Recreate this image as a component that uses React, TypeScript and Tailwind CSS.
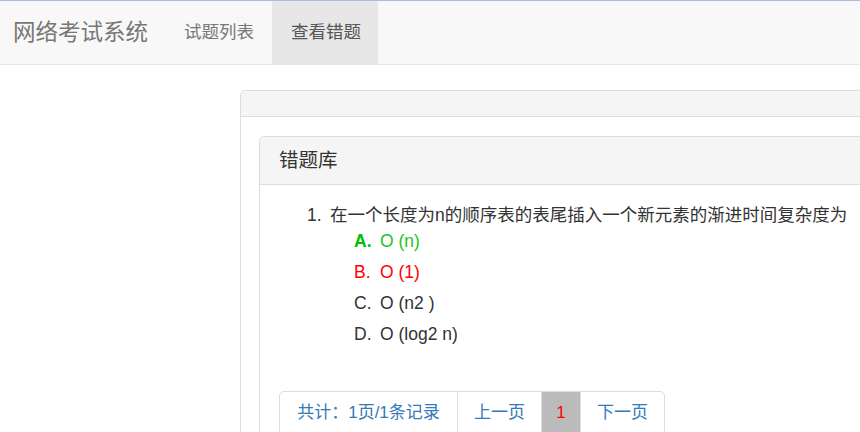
export default function App() {
  const options = [
    { key: "A.", text: "O (n)", cls: "text-[#22c322]", keyCls: "font-bold text-[#00c000]" },
    { key: "B.", text: "O (1)", cls: "text-[#ff0000]", keyCls: "text-[#ff0000]" },
    { key: "C.", text: "O (n2 )", cls: "text-[#333]", keyCls: "text-[#333]" },
    { key: "D.", text: "O (log2 n)", cls: "text-[#333]", keyCls: "text-[#333]" },
  ]

  return (
    <div
      className="h-[432px] w-full overflow-hidden bg-white text-[#333]"
      style={{ fontFamily: '"Liberation Sans", "Noto Sans CJK SC", sans-serif' }}
    >
      {/* navbar */}
      <nav className="flex h-[65px] border-t border-b border-t-[#a9bed6] border-b-[#e7e7e7] bg-[#f8f8f8]">
        <div className="flex items-center pl-[13px] pr-[18px] text-[22.5px] text-[#777]">网络考试系统</div>
        <div className="flex items-center pl-[18px] pr-[18px] text-[17.5px] text-[#777]">试题列表</div>
        <div className="flex items-center bg-[#e7e7e7] pl-[19px] pr-[17px] text-[17.5px] text-[#555]">查看错题</div>
      </nav>

      {/* outer panel */}
      <div className="ml-[240px] mt-[25px] w-[1000px] rounded-[5px] border border-[#ddd]">
        <div className="h-[26px] rounded-t-[5px] border-b border-[#ddd] bg-[#f5f5f5]" />
        <div className="pl-[18px] pt-[19px]">
          {/* inner panel */}
          <div className="rounded-[5px] border border-[#ddd]">
            <div className="flex h-[48px] items-center rounded-t-[5px] border-b border-[#ddd] bg-[#f5f5f5] pl-[19px] text-[19.5px] text-[#333]">
              错题库
            </div>
            <div className="pl-[19px] pt-[18px]">
              <div className="ml-[28px] flex text-[17.5px] leading-[25px]">
                <span className="w-[23px]">1.</span>
                <span>在一个长度为n的顺序表的表尾插入一个新元素的渐进时间复杂度为</span>
              </div>
              <div className="-mt-[2px] ml-[75px]">
                {options.map((o) => (
                  <div key={o.key} className="flex h-[31px] items-center text-[17.5px]">
                    <span className={`w-[26px] ${o.keyCls}`}>{o.key}</span>
                    <span className={o.cls}>{o.text}</span>
                  </div>
                ))}
              </div>

              {/* pagination */}
              <div className="mt-[41px] inline-flex h-[44px] rounded-[5px] border border-[#ddd] text-[17px] text-[#337ab7]">
                <div className="flex w-[177px] items-center justify-center">共计：1页/1条记录</div>
                <div className="flex w-[84px] items-center justify-center border-l border-[#ddd]">上一页</div>
                <div className="flex w-[39px] items-center justify-center border-l border-[#ddd] bg-[#bbb] text-[#ff0000]">1</div>
                <div className="flex w-[84px] items-center justify-center border-l border-[#ddd]">下一页</div>
              </div>
            </div>
          </div>
        </div>
      </div>
    </div>
  )
}
